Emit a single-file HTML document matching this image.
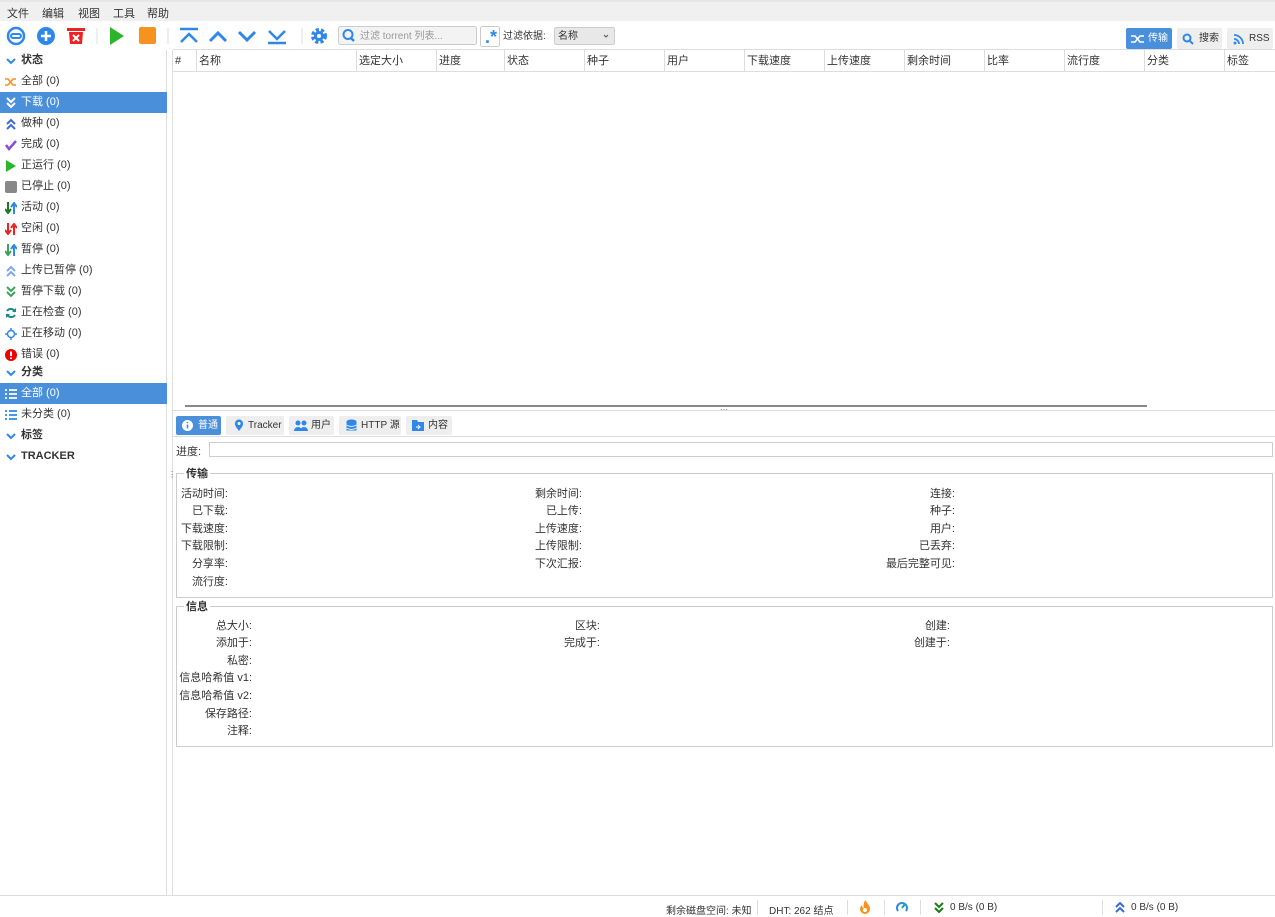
<!DOCTYPE html>
<html><head><meta charset="utf-8"><style>
*{box-sizing:border-box;margin:0;padding:0}
body{width:1275px;height:917px;overflow:hidden;background:#fff;font-family:"Liberation Sans","Noto Sans CJK SC",sans-serif;font-size:11px;color:#333;position:relative}
.a{position:absolute;white-space:nowrap}
.menu{left:0;top:0;width:1275px;height:21px;background:#f0f0f0;border-top:2px solid #e6e6e6}
.menu span{position:absolute;top:3px}
.sb div.it{position:absolute;left:0;width:167px;height:21px;line-height:21px;padding-left:21px}
.sel{background:#4a8fd9;color:#fff}
.ic{position:absolute;left:5px;top:5px;width:12px;height:12px}
.th{position:absolute;top:50px;height:21px;line-height:22px;border-left:1px solid #ddd;padding-left:2px;font-size:11px}
.tab{position:absolute;top:416px;height:19px;line-height:20px;background:#eee;border-radius:2px;font-size:10px;padding-left:22px}
.lb{position:absolute;text-align:right;width:120px;line-height:14px}
fieldset{position:absolute;border:1px solid #ccc;left:176px;width:1097px}
legend{margin-left:7px;padding:0 2px;font-weight:bold;font-size:11px}
.btn{position:absolute;top:28px;height:21px;border-radius:2px;background:#eee;font-size:10px;line-height:21px;padding-left:22px}
.st{position:absolute;top:902px;font-size:10px;white-space:nowrap}
</style></head><body>
<div class="a menu"><span style="left:7px">文件</span><span style="left:42px">编辑</span><span style="left:78px">视图</span><span style="left:113px">工具</span><span style="left:147px">帮助</span></div>

<svg class="a" style="left:0;top:22px" width="640" height="28">
<circle cx="16" cy="14" r="8" fill="none" stroke="#2e88e8" stroke-width="2.5"/><rect x="11" y="12" width="10" height="4" rx="2" fill="none" stroke="#2e88e8" stroke-width="2"/>
<circle cx="46" cy="14" r="9" fill="#2e88e8"/><path d="M46 9v10M41 14h10" stroke="#fff" stroke-width="2.5"/>
<rect x="67" y="6" width="18" height="3" fill="#e22"/><path d="M69 10h14l-1 12h-12z" fill="#e22"/><path d="M73 13l6 6M79 13l-6 6" stroke="#fff" stroke-width="2"/>
<line x1="97" y1="6" x2="97" y2="22" stroke="#ddd"/>
<path d="M110 5l14 9-14 9z" fill="#2ab52a"/>
<rect x="139" y="5" width="17" height="17" rx="2" fill="#f7921e"/>
<line x1="168" y1="6" x2="168" y2="22" stroke="#ddd"/>
<path d="M180 7h18M181 20l8-8 8 8" stroke="#2e88e8" stroke-width="2.5" fill="none"/>
<path d="M210 19l8-8 8 8" stroke="#2e88e8" stroke-width="3" fill="none"/>
<path d="M239 10l8 8 8-8" stroke="#2e88e8" stroke-width="3" fill="none"/>
<path d="M269 9l8 8 8-8M268 21h18" stroke="#2e88e8" stroke-width="2.5" fill="none"/>
<line x1="302" y1="6" x2="302" y2="22" stroke="#ddd"/>
<circle cx="319" cy="14" r="6" fill="none" stroke="#2e88e8" stroke-width="4" stroke-dasharray="3 2"/><circle cx="319" cy="14" r="5" fill="#2e88e8"/><circle cx="319" cy="14" r="2" fill="#fff"/>
<rect x="338.5" y="4.5" width="138" height="18" rx="2" fill="#f3f3f3" stroke="#ccc"/>
<circle cx="348" cy="12.5" r="4.5" fill="none" stroke="#2e88e8" stroke-width="2"/><path d="M351 16l3 3" stroke="#2e88e8" stroke-width="2.5"/>
<text x="360" y="17" font-size="10" fill="#999" font-family="Liberation Sans,Noto Sans CJK SC,sans-serif">过滤 torrent 列表...</text>
<rect x="480.5" y="4.5" width="19" height="20" rx="2" fill="#fff" stroke="#ccc"/>
<text x="485" y="21" font-size="18" fill="#2e88e8" font-weight="bold">.*</text>
<text x="503" y="17" font-size="10" fill="#333" font-family="Liberation Sans,Noto Sans CJK SC,sans-serif">过滤依据:</text>
<rect x="554.5" y="5.5" width="60" height="17" rx="2" fill="#e8e8e8" stroke="#ccc"/>
<text x="558" y="17" font-size="10" fill="#333" font-family="Liberation Sans,Noto Sans CJK SC,sans-serif">名称</text>
<path d="M604 13l2 2 2-2" stroke="#555" fill="none"/>
</svg>
<div class="btn" style="left:1126px;width:46px;background:#4a8fd9;color:#fff">传输<svg class="a" style="left:5px;top:6px" width="14" height="10"><path d="M0 2h4l5 6h4M0 8h4l5-6h4" stroke="#fff" stroke-width="1.6" fill="none"/></svg></div>
<div class="btn" style="left:1177px;width:45px">搜索<svg class="a" style="left:5px;top:5px" width="12" height="12"><circle cx="5" cy="5" r="3.5" fill="none" stroke="#2e88e8" stroke-width="2"/><path d="M8 8l3 3" stroke="#2e88e8" stroke-width="2"/></svg></div>
<div class="btn" style="left:1227px;width:46px">RSS<svg class="a" style="left:6px;top:6px" width="11" height="11"><circle cx="2" cy="9" r="1.5" fill="#2e88e8"/><path d="M1 5a5 5 0 0 1 5 5M1 1a9 9 0 0 1 9 9" stroke="#2e88e8" stroke-width="1.8" fill="none"/></svg></div>

<div class="a" style="left:166px;top:50px;width:1px;height:845px;background:#ddd"></div>
<div class="a" style="left:172px;top:50px;width:1px;height:845px;background:#ddd"></div>
<div class="a" style="left:168px;top:470px;font-size:8px;color:#666">⋮</div>
<div class="sb">
<div class="it" style="top:50px;font-weight:bold"><svg class="ic" viewBox="0 0 12 12"><path d="M2 4l4 4 4-4" stroke="#2e88e8" stroke-width="2" fill="none"/></svg>状态</div>
<div class="it" style="top:71px"><svg class="ic" viewBox="0 0 12 12"><path d="M0 3h3l5 6h3M0 9h3l5-6h3" stroke="#f7921e" stroke-width="1.6" fill="none"/></svg>全部 (0)</div>
<div class="it sel" style="top:92px"><svg class="ic" viewBox="0 0 12 12"><path d="M2 1l4 4 4-4M2 6l4 4 4-4" stroke="#fff" stroke-width="2" fill="none"/></svg>下载 (0)</div>
<div class="it" style="top:113px"><svg class="ic" viewBox="0 0 12 12"><path d="M2 6l4-4 4 4M2 11l4-4 4 4" stroke="#3a6bd9" stroke-width="2" fill="none"/></svg>做种 (0)</div>
<div class="it" style="top:134px"><svg class="ic" viewBox="0 0 12 12"><path d="M1 6l3 4 7-8" stroke="#8a4fd9" stroke-width="2.5" fill="none"/></svg>完成 (0)</div>
<div class="it" style="top:155px"><svg class="ic" viewBox="0 0 12 12"><path d="M1 0l10 6-10 6z" fill="#2ab52a"/></svg>正运行 (0)</div>
<div class="it" style="top:176px"><svg class="ic" viewBox="0 0 12 12"><rect width="12" height="12" rx="2" fill="#888"/></svg>已停止 (0)</div>
<div class="it" style="top:197px"><svg class="ic" viewBox="0 0 12 12"><path d="M3 0v10M0 7l3 4 3-4" stroke="#1a7a1a" stroke-width="2" fill="none"/><path d="M9 12V2M6 5l3-4 3 4" stroke="#2e88e8" stroke-width="2" fill="none"/></svg>活动 (0)</div>
<div class="it" style="top:218px"><svg class="ic" viewBox="0 0 12 12"><path d="M3 0v10M0 7l3 4 3-4M9 12V2M6 5l3-4 3 4" stroke="#e22" stroke-width="2" fill="none"/></svg>空闲 (0)</div>
<div class="it" style="top:239px"><svg class="ic" viewBox="0 0 12 12"><path d="M3 0v10M0 7l3 4 3-4" stroke="#3aa55a" stroke-width="2" fill="none"/><path d="M9 12V2M6 5l3-4 3 4" stroke="#2e88e8" stroke-width="2" fill="none"/></svg>暂停 (0)</div>
<div class="it" style="top:260px"><svg class="ic" viewBox="0 0 12 12"><path d="M2 6l4-4 4 4M2 11l4-4 4 4" stroke="#7aa8ee" stroke-width="2" fill="none"/></svg>上传已暂停 (0)</div>
<div class="it" style="top:281px"><svg class="ic" viewBox="0 0 12 12"><path d="M2 1l4 4 4-4M2 6l4 4 4-4" stroke="#3aa55a" stroke-width="2" fill="none"/></svg>暂停下载 (0)</div>
<div class="it" style="top:302px"><svg class="ic" viewBox="0 0 12 12"><path d="M10 5A4.5 4.5 0 0 0 2 4M2 7a4.5 4.5 0 0 0 8 1" stroke="#178a8a" stroke-width="2" fill="none"/><path d="M11 1v4H7M1 11V7h4" fill="#178a8a"/></svg>正在检查 (0)</div>
<div class="it" style="top:323px"><svg class="ic" viewBox="0 0 12 12"><circle cx="6" cy="6" r="3.5" fill="none" stroke="#2e88e8" stroke-width="1.5"/><path d="M6 0v2M6 10v2M0 6h2M10 6h2" stroke="#2e88e8" stroke-width="1.5"/></svg>正在移动 (0)</div>
<div class="it" style="top:344px"><svg class="ic" viewBox="0 0 12 12"><circle cx="6" cy="6" r="6" fill="#e00"/><path d="M6 2.5v4.5M6 8.5v1.5" stroke="#fff" stroke-width="2"/></svg>错误 (0)</div>
<div class="it" style="top:362px;font-weight:bold"><svg class="ic" viewBox="0 0 12 12"><path d="M2 4l4 4 4-4" stroke="#2e88e8" stroke-width="2" fill="none"/></svg>分类</div>
<div class="it sel" style="top:383px"><svg class="ic" viewBox="0 0 12 12"><path d="M0 2h2M4 2h8M0 6h2M4 6h8M0 10h2M4 10h8" stroke="#fff" stroke-width="1.8"/></svg>全部 (0)</div>
<div class="it" style="top:404px"><svg class="ic" viewBox="0 0 12 12"><path d="M0 2h2M4 2h8M0 6h2M4 6h8M0 10h2M4 10h8" stroke="#2e88e8" stroke-width="1.8"/></svg>未分类 (0)</div>
<div class="it" style="top:425px;font-weight:bold"><svg class="ic" viewBox="0 0 12 12"><path d="M2 4l4 4 4-4" stroke="#2e88e8" stroke-width="2" fill="none"/></svg>标签</div>
<div class="it" style="top:446px;font-weight:bold"><svg class="ic" viewBox="0 0 12 12"><path d="M2 4l4 4 4-4" stroke="#2e88e8" stroke-width="2" fill="none"/></svg>TRACKER</div>
</div>

<div class="a" style="left:173px;top:49px;width:1102px;height:1px;background:#ddd"></div>
<div class="a" style="left:173px;top:71px;width:1102px;height:1px;background:#ddd"></div>
<div class="th" style="left:172px">#</div>
<div class="th" style="left:196px">名称</div>
<div class="th" style="left:356px">选定大小</div>
<div class="th" style="left:436px">进度</div>
<div class="th" style="left:504px">状态</div>
<div class="th" style="left:584px">种子</div>
<div class="th" style="left:664px">用户</div>
<div class="th" style="left:744px">下载速度</div>
<div class="th" style="left:824px">上传速度</div>
<div class="th" style="left:904px">剩余时间</div>
<div class="th" style="left:984px">比率</div>
<div class="th" style="left:1064px">流行度</div>
<div class="th" style="left:1144px">分类</div>
<div class="th" style="left:1224px">标签</div>
<div class="a" style="left:185px;top:405px;width:962px;height:2px;background:#888"></div>
<div class="a" style="left:173px;top:410px;width:1102px;height:1px;background:#ddd"></div>
<div class="a" style="left:720px;top:405px;font-size:8px;color:#555">···</div>

<div class="tab" style="left:176px;width:45px;background:#4a8fd9;color:#fff"><svg class="a" style="left:6px;top:4px" width="11" height="11"><circle cx="5.5" cy="5.5" r="5.5" fill="#fff"/><path d="M5.5 4.5v4M5.5 2v1.3" stroke="#4a8fd9" stroke-width="1.6"/></svg>普通</div>
<div class="tab" style="left:226px;width:58px"><svg class="a" style="left:8px;top:3px" width="10" height="13"><path d="M5 12C1 7 1 6 1 4.5a4 4 0 0 1 8 0C9 6 9 7 5 12z" fill="#2e88e8"/><circle cx="5" cy="4.5" r="1.5" fill="#fff"/></svg>Tracker</div>
<div class="tab" style="left:289px;width:45px"><svg class="a" style="left:5px;top:4px" width="14" height="11"><circle cx="4" cy="3" r="2.5" fill="#2e88e8"/><circle cx="10" cy="3" r="2.5" fill="#2e88e8"/><path d="M0 11a4 4 0 0 1 8 0zM6 11a4 4 0 0 1 8 0z" fill="#2e88e8"/></svg>用户</div>
<div class="tab" style="left:339px;width:62px"><svg class="a" style="left:7px;top:3px" width="11" height="13"><ellipse cx="5.5" cy="2.5" rx="5" ry="2" fill="#2e88e8"/><rect x=".5" y="2.5" width="10" height="9" fill="#2e88e8"/><path d="M.5 6q5 3 10 0M.5 9q5 3 10 0" stroke="#eee" fill="none"/></svg>HTTP 源</div>
<div class="tab" style="left:406px;width:46px"><svg class="a" style="left:6px;top:4px" width="12" height="11"><path d="M0 0h5l1 2h6v9H0z" fill="#2e88e8"/><path d="M4 7h4M6 5l2 2-2 2" stroke="#fff" fill="none"/></svg>内容</div>
<div class="a" style="left:173px;top:436px;width:1102px;height:1px;background:#ddd"></div>
<div class="a" style="left:176px;top:443px">进度:</div>
<div class="a" style="left:209px;top:442px;width:1064px;height:15px;border:1px solid #ccc"></div>

<fieldset style="top:465px;height:133px"><legend>传输</legend></fieldset>
<div class="lb" style="left:108px;top:487px">活动时间:</div>
<div class="lb" style="left:108px;top:504px">已下载:</div>
<div class="lb" style="left:108px;top:522px">下载速度:</div>
<div class="lb" style="left:108px;top:539px">下载限制:</div>
<div class="lb" style="left:108px;top:557px">分享率:</div>
<div class="lb" style="left:108px;top:575px">流行度:</div>
<div class="lb" style="left:462px;top:487px">剩余时间:</div>
<div class="lb" style="left:462px;top:504px">已上传:</div>
<div class="lb" style="left:462px;top:522px">上传速度:</div>
<div class="lb" style="left:462px;top:539px">上传限制:</div>
<div class="lb" style="left:462px;top:557px">下次汇报:</div>
<div class="lb" style="left:835px;top:487px">连接:</div>
<div class="lb" style="left:835px;top:504px">种子:</div>
<div class="lb" style="left:835px;top:522px">用户:</div>
<div class="lb" style="left:835px;top:539px">已丢弃:</div>
<div class="lb" style="left:835px;top:557px">最后完整可见:</div>

<fieldset style="top:598px;height:149px"><legend>信息</legend></fieldset>
<div class="lb" style="left:132px;top:619px">总大小:</div>
<div class="lb" style="left:132px;top:636px">添加于:</div>
<div class="lb" style="left:132px;top:654px">私密:</div>
<div class="lb" style="left:132px;top:671px">信息哈希值 v1:</div>
<div class="lb" style="left:132px;top:689px">信息哈希值 v2:</div>
<div class="lb" style="left:132px;top:707px">保存路径:</div>
<div class="lb" style="left:132px;top:724px">注释:</div>
<div class="lb" style="left:480px;top:619px">区块:</div>
<div class="lb" style="left:480px;top:636px">完成于:</div>
<div class="lb" style="left:830px;top:619px">创建:</div>
<div class="lb" style="left:830px;top:636px">创建于:</div>

<div class="a" style="left:0;top:895px;width:1275px;height:1px;background:#ddd"></div>
<div class="st" style="left:666px">剩余磁盘空间: 未知</div>
<div class="a" style="left:757px;top:900px;width:1px;height:15px;background:#ddd"></div>
<div class="st" style="left:769px">DHT: 262 结点</div>
<div class="a" style="left:847px;top:900px;width:1px;height:15px;background:#ddd"></div>
<svg class="a" style="left:860px;top:900px" width="10" height="14"><path d="M5 0C8 4 10 6 10 9a5 5 0 0 1-10 0c0-2 1-3 2-4 0 2 1 3 2 3C3 5 4 3 5 0z" fill="#f7921e"/><circle cx="5" cy="10" r="2" fill="#fff"/></svg>
<div class="a" style="left:884px;top:900px;width:1px;height:15px;background:#ddd"></div>
<svg class="a" style="left:896px;top:901px" width="12" height="12"><path d="M2 10A5 5 0 1 1 10 10" stroke="#2e88e8" stroke-width="2" fill="none"/><path d="M6 7l3-4" stroke="#1aa" stroke-width="2"/></svg>
<div class="a" style="left:920px;top:900px;width:1px;height:15px;background:#ddd"></div>
<svg class="a" style="left:934px;top:902px" width="10" height="11"><path d="M1 1l4 4 4-4M1 6l4 4 4-4" stroke="#1a7a1a" stroke-width="2" fill="none"/></svg>
<div class="st" style="left:950px">0 B/s (0 B)</div>
<div class="a" style="left:1102px;top:900px;width:1px;height:15px;background:#ddd"></div>
<svg class="a" style="left:1115px;top:902px" width="10" height="11"><path d="M1 5l4-4 4 4M1 10l4-4 4 4" stroke="#3a6bd9" stroke-width="2" fill="none"/></svg>
<div class="st" style="left:1131px">0 B/s (0 B)</div>
</body></html>
